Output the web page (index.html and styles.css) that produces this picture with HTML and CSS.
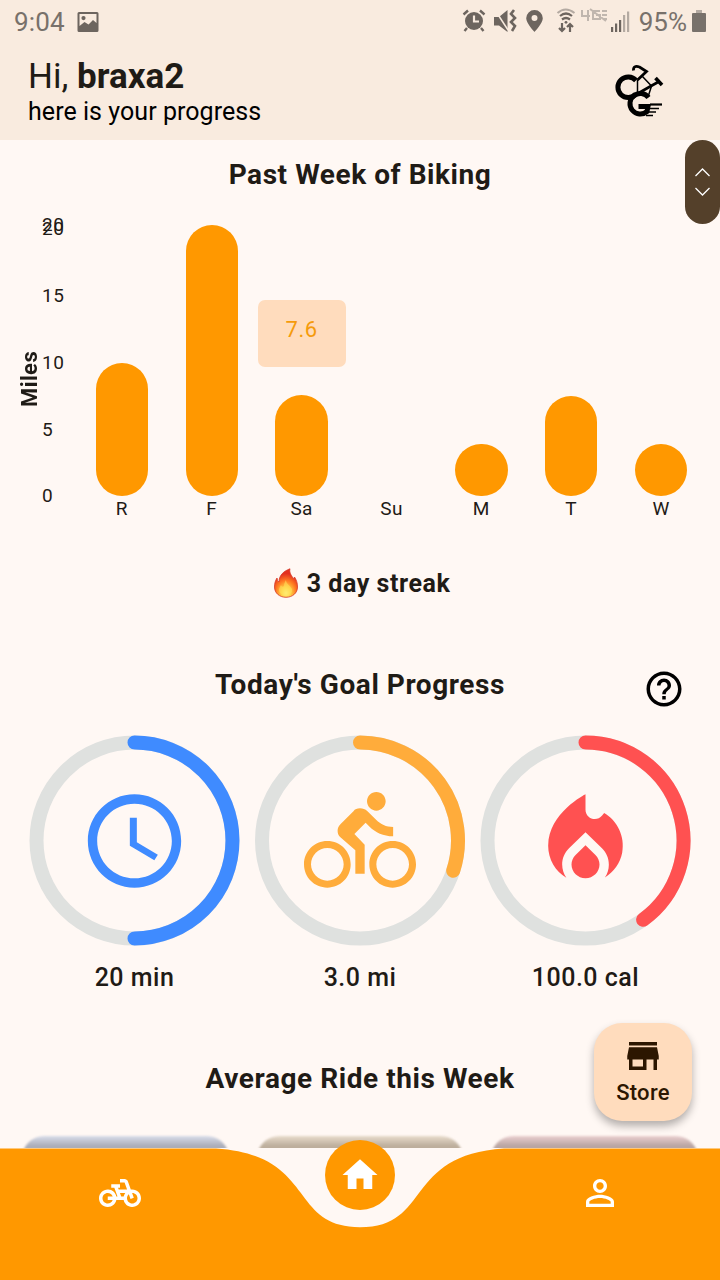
FILE: index.html
```html
<!DOCTYPE html>
<html lang="en">
<head>
<meta charset="utf-8">
<title>Ride progress</title>
<link rel="stylesheet" href="styles.css">
</head>
<body>
<div class="app">
  <header class="header">
    <div class="status">
      <span class="clock">9:04</span>
      <svg class="st-photo" width="22" height="20" viewBox="0 0 22 20"><path fill="#6d655f" fill-rule="evenodd" d="M2 0h18a1.500 1.500 0 0 1 1.500 1.500v17A1.500 1.500 0 0 1 20 20H2a1.500 1.500 0 0 1-1.500-1.500v-17A1.500 1.500 0 0 1 2 0zM2.500 2v12l5-4 4 2.500 4.500-4.500 3.500 3V2zM6.500 4a2 2 0 1 1 0 4.200 2 2 0 0 1 0-4.200z"/></svg>
      <svg class="st-icons" width="174" height="26" viewBox="0 0 174 26">
        <g fill="#6d655f" stroke="#6d655f" stroke-width="0">
          <circle cx="12" cy="13" r="9"/>
          <path d="M1.500 6.500 6 2.500M18 2.500l4.500 4M5 20l-2.500 3M19 20l2.500 3" stroke-width="2.400"/>
          <path d="M12 7.500v6h5" fill="none" stroke="#f9ebdf" stroke-width="2.200"/>
          <path d="M32 9h5l8.500-7v22L37 17.500h-5z"/>
          <path d="m33 2 13 20" stroke="#f9ebdf" stroke-width="1.500"/>
          <path d="m52 2-3 4 4 4-4 4 4 4-3 5" fill="none" stroke-width="2.600"/>
          <path fill-rule="evenodd" d="M72.500 2a8.300 8.300 0 0 1 8.300 8.300c0 5-8.300 13.700-8.300 13.700s-8.300-8.700-8.300-13.700A8.300 8.300 0 0 1 72.500 2zm0 5a3 3 0 1 0 0 6 3 3 0 0 0 0-6z"/>
          <path d="M98 8q6-5 12 0M100 11.500q4-3 8 0" fill="none" stroke-width="2.200"/>
          <path d="M95.500 5q8-7 17 0" fill="none" stroke="#b4aaa2" stroke-width="2"/>
          <circle cx="104" cy="14.300" r="1.400"/>
          <path d="M100 15v8m-3-3 3 3 3-3M108 24v-8m-3 3 3-3 3 3" fill="none" stroke-width="2.200"/>
          <g fill="none" stroke="#c0b6ae" stroke-width="2"><path d="M120 2v6h8M126 2v11M138 3h-7v8h7V7h-4M140 3h5M140 7h5M140 11h5M128 1l16 12"/></g>
          <path d="M149 19h2.200v5H149zM153 15.500h2.200V24H153zM157 12h2.200v12H157z"/>
          <path fill="#b4aaa2" d="M161 7h2.200v17H161zM165 3.500h2.200V24H165z"/>
        </g>
      </svg>
      <span class="percent">95%</span>
      <svg class="st-batt" width="14" height="22" viewBox="0 0 14 22"><path fill="#b4aaa2" d="M4 0h6v3H4z"/><rect y="3" width="14" height="19" rx="1" fill="#78716b"/></svg>
    </div>
    <div class="greeting">
      <div>
        <div class="hello">Hi, <b>braxa2</b></div>
        <div class="sub">here is your progress</div>
      </div>
      <svg class="logo" width="52" height="54" viewBox="0 0 52 54">
        <g fill="none" stroke="#000">
          <path d="M24 30A10.300 10.300 0 1 1 24 16.500" stroke-width="5"/>
          <path d="M36.500 33.500A10.300 10.300 0 1 0 35 47.500L36 42.500h-9.500" stroke-width="5"/>
          <path d="M21.500 6.500Q21 1 27.500 3l7 4.500-9 8.500" stroke-width="2.800"/>
          <path d="M25.500 16v13M30.500 12.500l9 9.500M39.500 22l-3.500 11" stroke-width="1.500"/>
          <path d="M25 30l14-8 9-5" stroke-width="2.600"/>
          <path d="M43.500 14l6.500 7" stroke-width="3.600"/>
          <path d="M38 40.500h12" stroke-width="2.200"/>
          <path d="M38 44.500h9M37 48h7M34 51.500h7" stroke-width="1.700"/>
        </g>
      </svg>
    </div>
  </header>

  <main class="content">
    <h2 class="title">Past Week of Biking</h2>
    <section class="chart">
      <div class="axis-name"><span>Miles</span></div>
      <div class="axis">
        <span class="tick" style="bottom:270px">20</span>
        <span class="tick" style="bottom:266px">20</span>
        <span class="tick" style="bottom:199px">15</span>
        <span class="tick" style="bottom:132px">10</span>
        <span class="tick" style="bottom:65px">5</span>
        <span class="tick" style="bottom:-1px">0</span>
      </div>
      <div class="days">
        <div class="day"><i class="bar" style="height:133.500px"></i><span>R</span></div>
        <div class="day"><i class="bar" style="height:271px"></i><span>F</span></div>
        <div class="day"><b class="tip">7.6</b><i class="bar" style="height:101.500px"></i><span>Sa</span></div>
        <div class="day"><span>Su</span></div>
        <div class="day"><i class="bar" style="height:52.500px"></i><span>M</span></div>
        <div class="day"><i class="bar" style="height:100px"></i><span>T</span></div>
        <div class="day"><i class="bar" style="height:52.500px"></i><span>W</span></div>
      </div>
    </section>

    <div class="streak">
      <svg width="26" height="30" viewBox="0 0 26 30">
        <defs><radialGradient id="fire" cx=".5" cy=".85" r=".8"><stop offset="0" stop-color="#fff48a"/><stop offset=".25" stop-color="#ffd045"/><stop offset=".55" stop-color="#ff7a22"/><stop offset=".85" stop-color="#e3301f"/></radialGradient></defs>
        <path fill="url(#fire)" stroke="#d63a28" stroke-width=".8" d="M17 .800C16 4 18 7 20 10q1 2 1.500-1c2 3 3 6 3 10 0 6-5 10.300-11.500 10.300S1.500 25 1.500 19c0-3 .5-6 2.500-9q0 3 2 4C6 7 11 3 17 .800z"/>
        <path fill="#ffe45b" opacity=".55" d="M13 12c0 4 4 5 6 9 1 4-3 6.500-6 6.500s-7-2-7-5.500c0-2 1-3 2-5 1 2 2 2 3 1 0-3 1-4 2-6z"/>
      </svg>
      <span>3 day streak</span>
    </div>

    <div class="goal-head">
      <h2 class="title">Today's Goal Progress</h2>
      <svg class="help" width="42" height="42" viewBox="0 0 24 24"><path d="M11 18h2v-2h-2v2zm1-16C6.480 2 2 6.480 2 12s4.480 10 10 10 10-4.480 10-10S17.520 2 12 2zm0 18c-4.410 0-8-3.590-8-8s3.590-8 8-8 8 3.590 8 8-3.590 8-8 8zm0-14c-2.210 0-4 1.790-4 4h2c0-1.100.9-2 2-2s2 .9 2 2c0 2-3 1.750-3 5h2c0-2.250 3-2.500 3-5 0-2.210-1.790-4-4-4z"/></svg>
    </div>
    <section class="goals">
      <div class="goal">
        <svg width="211" height="211" viewBox="0 0 211 211">
          <circle class="track" cx="105.500" cy="105.500" r="98"/>
          <path class="arc" stroke="#3f8bff" d="M105.500 7.500a98 98 0 0 1 0 196"/>
          <path fill="#3f8bff" transform="translate(49.500 50) scale(4.667)" d="M11.990 2C6.470 2 2 6.480 2 12s4.470 10 9.990 10C17.520 22 22 17.520 22 12S17.520 2 11.990 2zM12 20c-4.420 0-8-3.580-8-8s3.580-8 8-8 8 3.580 8 8-3.580 8-8 8zm.5-13H11v6l5.250 3.150.75-1.230-4.500-2.670z"/>
        </svg>
        <span>20 min</span>
      </div>
      <div class="goal">
        <svg width="211" height="211" viewBox="0 0 211 211">
          <circle class="track" cx="105" cy="105.500" r="98"/>
          <path class="arc" stroke="#ffac3b" d="M105 7.500a98 98 0 0 1 93.200 128.280"/>
          <path fill="#ffac3b" transform="translate(49 50) scale(4.667)" d="M15.500 5.500c1.100 0 2-.9 2-2s-.9-2-2-2-2 .9-2 2 .9 2 2 2zM5 12c-2.800 0-5 2.200-5 5s2.200 5 5 5 5-2.200 5-5-2.200-5-5-5zm0 8.500c-1.900 0-3.500-1.600-3.500-3.500s1.600-3.500 3.500-3.500 3.500 1.600 3.500 3.500-1.600 3.500-3.500 3.500zm5.800-10l2.400-2.400.8.8c1.300 1.300 3 2.100 5.100 2.100V9c-1.500 0-2.700-.6-3.600-1.500l-1.900-1.900c-.5-.4-1-.6-1.600-.6s-1.100.2-1.400.6L7.800 8.400c-.4.4-.6.9-.6 1.400 0 .6.2 1.100.6 1.400L11 14v5h2v-6.200l-2.200-2.300zM19 12c-2.800 0-5 2.200-5 5s2.200 5 5 5 5-2.200 5-5-2.200-5-5-5zm0 8.500c-1.900 0-3.500-1.600-3.500-3.500s1.600-3.500 3.500-3.500 3.500 1.600 3.500 3.500-1.600 3.500-3.500 3.500z"/>
        </svg>
        <span>3.0 mi</span>
      </div>
      <div class="goal">
        <svg width="211" height="211" viewBox="0 0 211 211">
          <circle class="track" cx="105.500" cy="105.500" r="98"/>
          <path class="arc" stroke="#ff5151" d="M105.500 7.500a98 98 0 0 1 57.600 177.280"/>
          <path fill="#ff5151" transform="translate(49.500 50) scale(4.667)" d="M12 12.900l-2.130 2.090c-.56.560-.87 1.290-.87 2.070C9 18.680 10.350 20 12 20s3-1.320 3-2.940c0-.78-.31-1.520-.87-2.070L12 12.900zM16 6l-.44.550C14.380 8.020 12 7.190 12 5.300V2S4 6 4 13c0 2.920 1.560 5.470 3.890 6.860-.56-.79-.89-1.760-.89-2.800 0-1.320.52-2.560 1.470-3.500L12 10.100l3.530 3.470c.95.930 1.470 2.170 1.470 3.500 0 1.020-.31 1.960-.85 2.750 1.890-1.150 3.290-3.060 3.710-5.300.66-3.550-1.070-6.900-3.860-8.520z"/>
        </svg>
        <span>100.0 cal</span>
      </div>
    </section>

    <h2 class="title average">Average Ride this Week</h2>
    <div class="cards">
      <div class="card blue"></div>
      <div class="card tan"></div>
      <div class="card rose"></div>
    </div>
  </main>

  <nav class="nav">
    <svg class="nav-shape" width="720" height="132" viewBox="0 0 720 132"><path fill="#ff9800" d="M0 .5H216C316.800 7 288 79.250 360 79.250S403.200 7 504 .5H720V132H0z"/></svg>
    <div class="nav-items">
      <svg width="42" height="42" viewBox="0 0 24 24"><path d="M18.180 10l-1.700-4.680C16.190 4.530 15.440 4 14.600 4H12v2h2.600l1.460 4h-4.810l-.36-1H12V7H7v2h1.750l1.820 5H9.900c-.44-2.230-2.310-3.880-4.650-3.990C2.450 9.870 0 12.200 0 15c0 2.800 2.200 5 5 5 2.460 0 4.450-1.690 4.900-4h4.200c.44 2.230 2.310 3.880 4.650 3.990 2.800.13 5.250-2.190 5.250-5 0-2.800-2.200-5-5-5h-.82zM7.820 16c-.4 1.170-1.490 2-2.820 2-1.680 0-3-1.320-3-3s1.320-3 3-3c1.330 0 2.420.83 2.820 2H5v2h2.820zm6.280-2h-1.400l-.73-2H15c-.44.580-.76 1.250-.9 2zm4.900 4c-1.680 0-3-1.320-3-3 0-.93.410-1.730 1.050-2.280l.96 2.640 1.880-.68-.97-2.670c.03 0 .05-.01.080-.01 1.680 0 3 1.320 3 3s-1.320 3-3 3z"/></svg>
      <div class="home"><svg width="42" height="42" viewBox="0 0 24 24"><path d="M10 20v-6h4v6h5v-8h3L12 3 2 12h3v8z"/></svg></div>
      <svg width="42" height="42" viewBox="0 0 24 24"><path d="M12 5.900c1.160 0 2.100.94 2.100 2.100s-.94 2.100-2.100 2.100S9.900 9.160 9.900 8s.94-2.100 2.100-2.100m0 9c2.970 0 6.100 1.460 6.100 2.100v1.100H5.900V17c0-.64 3.130-2.100 6.100-2.100M12 4C9.790 4 8 5.790 8 8s1.790 4 4 4 4-1.790 4-4-1.790-4-4-4zm0 9c-2.670 0-8 1.340-8 4v3h16v-3c0-2.660-5.330-4-8-4z"/></svg>
    </div>
  </nav>

  <div class="handle"><svg width="36" height="84" viewBox="0 0 36 84"><path fill="none" stroke="#fff" stroke-width="1.300" d="M10.500 36l7-7 7 7M10.500 48l7 7 7-7"/></svg></div>
  <div class="store">
    <svg width="42" height="42" viewBox="0 0 24 24"><path fill="#2c1600" d="M20 4H4v2h16V4zm1 10v-2l-1-5H4l-1 5v2h1v6h10v-6h4v6h2v-6h1zm-9 4H6v-4h6v4z"/></svg>
    <span>Store</span>
  </div>
</div>
</body>
</html>
```
FILE: styles.css
```css
* { box-sizing: border-box; }
body { margin: 0; font-family: Roboto, "Noto Sans", sans-serif; color: #1f1b16; }
svg { display: block; flex: none; }
.app { position: relative; width: 720px; height: 1280px; display: flex; flex-direction: column; background: #fff8f4; overflow: hidden; }
.header { height: 140px; background: #f9ebdf; flex: none; }
.status { height: 44px; display: flex; align-items: center; padding: 0 14px; color: #78716b; font-size: 26px; line-height: 44px; }
.st-photo { margin-left: 12px; margin-top: -1px; }
.st-icons { margin-left: auto; margin-top: -3px; }
.percent { margin-left: 3px; }
.clock { letter-spacing: .2px; }
.st-batt { margin-left: 5px; margin-top: -2px; }
.greeting { display: flex; justify-content: space-between; padding: 11px 56px 0 28px; }
.hello { font-size: 35px; line-height: 43px; letter-spacing: 0; }
.sub { font-size: 25px; line-height: 28px; color: #000; letter-spacing: .05px; }
.logo { margin-top: 9px; }
.content { height: 1008px; flex: none; overflow: hidden; }
.title { margin: 0; text-align: center; font-size: 28px; line-height: 34px; font-weight: 700; letter-spacing: .56px; }
.content > .title:first-child { padding-top: 18px; }
.chart { display: flex; height: 332px; padding: 0 14px 0 18px; }
.axis-name { width: 24px; padding-top: 150px; }
.axis-name span { display: block; writing-mode: vertical-rl; transform: rotate(180deg); font-size: 22px; line-height: 24px; font-weight: 700; height: 74px; text-align: center; letter-spacing: .4px; }
.axis { position: relative; width: 35px; height: 313px; }
.tick { position: absolute; left: 0; font-size: 19px; line-height: 20px; letter-spacing: .6px; }
.days { flex: 1; display: grid; grid-template-columns: repeat(7, 1fr); height: 328.5px; }
.day { display: flex; flex-direction: column; justify-content: flex-end; align-items: center; font-size: 19px; line-height: 24.5px; letter-spacing: .4px; }
.day > span { height: 24.5px; padding-top: 1px; }
.bar { width: 52.5px; border-radius: 27px; background: #ff9800; }
.tip { width: 88px; height: 67px; margin: 0 0 28px; border-radius: 7px; background: #ffdcbd; color: #f59b0c; font-weight: 400; font-size: 22px; line-height: 59px; text-align: center; letter-spacing: .6px; }
.streak { display: flex; justify-content: center; align-items: center; gap: 8px; height: 34px; margin-top: 42px; padding-left: 3px; font-size: 25px; font-weight: 700; letter-spacing: .55px; }
.goal-head { display: grid; grid-template-columns: 1fr auto 1fr; align-items: center; height: 42px; margin-top: 68px; padding-right: 35px; padding-left: 35px; }
.goal-head .title { grid-column: 2; padding-bottom: 8px; }
.help { justify-self: end; }
.goals { display: flex; justify-content: space-between; padding: 0 29px; margin-top: 25px; }
.goal { width: 211px; display: flex; flex-direction: column; align-items: center; font-size: 25px; font-weight: 500; letter-spacing: .5px; line-height: 36px; }
.goal svg { margin-bottom: 14px; }
.track { fill: none; stroke: #dfe1df; stroke-width: 14; }
.arc { fill: none; stroke-width: 14; stroke-linecap: round; }
.average { margin-top: 66px; }
.cards { display: flex; gap: 28px; padding: 0 22px; margin-top: 40px; }
.card { width: 207px; height: 140px; border-radius: 22px; filter: blur(.8px); }
.blue { background: linear-gradient(#d8ddeb, #abadb8 10px); }
.tan { background: linear-gradient(#e8dccc, #bdae9c 10px); }
.rose { background: linear-gradient(#ebcfd0, #b9a5a2 10px); }
.nav { position: relative; height: 132px; flex: none; background: #fff8f4; }
.nav-shape { position: absolute; inset: 0; }
.nav-items { position: relative; display: grid; grid-template-columns: repeat(3, 1fr); justify-items: center; padding-top: 24px; fill: #fff; }
.home { width: 70px; height: 70px; margin-top: -32px; border-radius: 50%; background: #ff9800; display: grid; place-items: center; }
.handle { position: absolute; left: 685px; top: 140px; width: 35px; height: 84px; border-radius: 18px; background: #54402a; }
.store { position: absolute; left: 594px; top: 1022.5px; width: 98px; height: 98px; border-radius: 28px; background: #ffdcbd; box-shadow: 0 5px 9px rgba(0,0,0,.3); display: flex; flex-direction: column; align-items: center; padding-top: 12px; font-size: 22px; font-weight: 500; line-height: 31px; color: #2c1600; letter-spacing: .3px; }
```
